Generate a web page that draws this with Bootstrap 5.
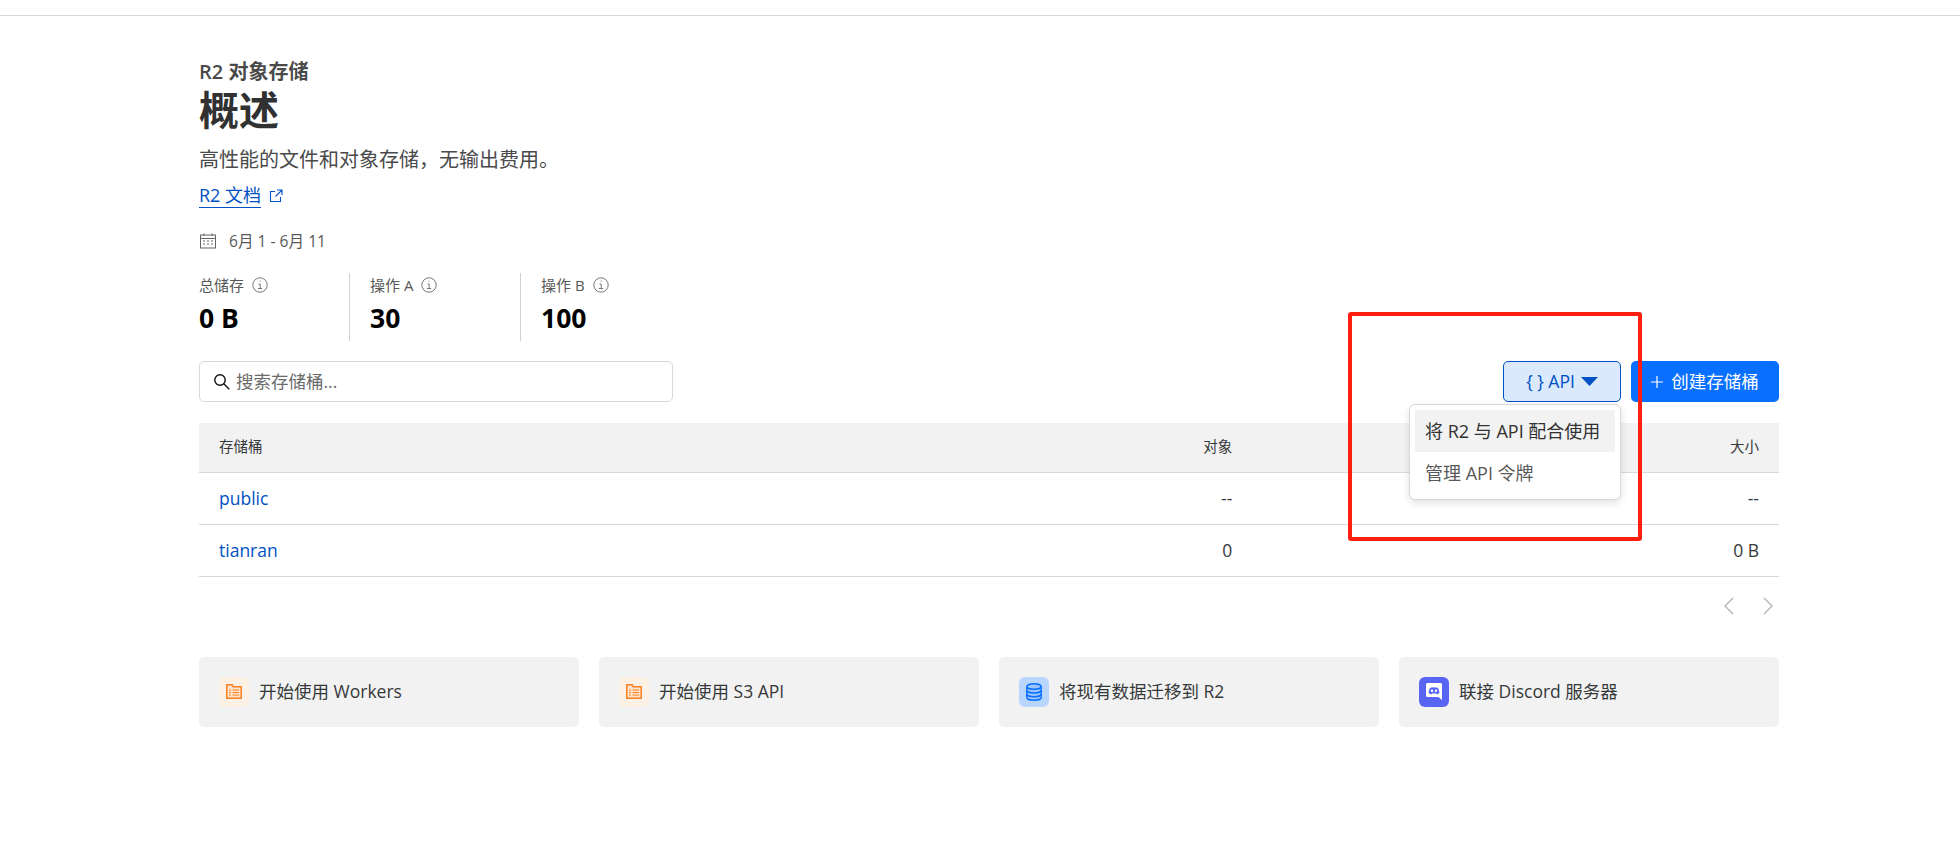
<!DOCTYPE html>
<html lang="zh">
<head>
    <meta charset="UTF-8">
    <meta name="viewport" content="width=device-width, initial-scale=1.0">
    <title>R2 对象存储</title>
    <link href="https://cdn.jsdelivr.net/npm/bootstrap@5.3.3/dist/css/bootstrap.min.css" rel="stylesheet">
    <style>
        body {
          font-family: "Open Sans", "Noto Sans CJK SC", sans-serif;
          color: #36393a;
          background: #fff;
        }
        .top-rule { height: 16px; border-bottom: 1px solid #d9d9d9; }
        .page-wrap { width: 1580px; margin-left: 199px; padding-top: 44px; }
        .crumb { font-size: 20px; font-weight: 600; line-height: 24px; color: #4a4a4a; }
        .page-title { font-size: 40px; font-weight: 700; line-height: 52px; margin: 0; color: #313131; }
        .page-desc { font-size: 20px; line-height: 24px; margin: 12px 0 0; color: #4a4a4a; }
        .doc-link { font-size: 18px; line-height: 24px; margin-top: 11px; }
        .doc-link a { color: #0051c3; text-decoration: none; border-bottom: 1px solid #0051c3; }
        .date-row { font-size: 15.6px; line-height: 20px; margin-top: 23px; gap: 12px; color: #595959; }
        .stats { margin-top: 22px; height: 68px; }
        .stat { width: 171px; padding-left: 20px; border-left: 1px solid #d0d0d0; }
        .stat:first-child { width: 150px; padding-left: 0; border-left: 0; }
        .stat-label { font-size: 15px; line-height: 20px; gap: 8px; color: #595959; padding-top: 2px; }
        .stat-value { font-size: 26.5px; font-weight: 700; line-height: 32px; color: #000; margin-top: 7px; }
        .toolbar { margin-top: 20px; height: 41px; }
        .search-box {
          width: 474px; height: 41px; border: 1px solid #d9d9d9; border-radius: 5px;
          padding-left: 13px; gap: 6px; font-size: 17.5px; color: #6b6b6b;
        }
        .api-btn, .create-btn { height: 41px; font-size: 17.5px; border-radius: 5px; padding: 0; }
        .api-btn {
          width: 118px; background: #dbe9fd; border: 1px solid #0051c3; color: #0051c3;
          gap: 6px; justify-content: center;
        }
        .api-btn::after { display: none; }
        .create-btn { width: 148px; background: #086fff; border: 0; color: #fff; gap: 8px; justify-content: center; }
        .action-group { gap: 10px; }
        .api-menu {
          top: calc(100% + 2px); right: 0; width: 212px; min-width: 0; padding: 5px;
          border: 1px solid #d9d9d9; border-radius: 6px; box-shadow: 0 3px 8px rgba(0,0,0,.12);
        }
        .api-menu .dropdown-item { height: 42px; padding: 0 10px; font-size: 18px; line-height: 42px; color: #595959; }
        .api-menu .dropdown-item.current { background: #f2f2f2; color: #313131; }
        .bucket-table { margin: 21px 0 0; table-layout: fixed; color: #36393a; }
        .bucket-table th, .bucket-table td { padding: 0 20px; vertical-align: middle; border-bottom: 1px solid #d9d9d9; }
        .bucket-table th { height: 49px; background: #f2f2f2; font-size: 14.5px; font-weight: 400; }
        .bucket-table td { height: 52px; font-size: 17.5px; }
        .bucket-table a { color: #0051c3; text-decoration: none; }
        .pager-row { gap: 23px; padding: 20px 5px 0 0; height: 60px; justify-content: flex-end; }
        .guide-row { margin-top: 20px; gap: 20px; }
        .guide-tile {
          flex: 1 1 0; height: 70px; background: #f2f2f2; border-radius: 5px;
          padding: 0 20px; gap: 10px; font-size: 17.5px; color: #36393a;
        }
        .tile-icon { width: 30px; height: 30px; border-radius: 6px; flex: none; }
        .tile-orange { background: #fdf1e6; }
        .tile-blue { background: #b9d6ff; }
        .tile-discord { background: #5865f2; }
        .red-frame {
          position: absolute; left: 1348px; top: 312px; width: 294px; height: 229px;
          border: 4px solid #ff1f10; border-radius: 3px; pointer-events: none; z-index: 2000;
        }
    </style>
</head>
<body>
<div class="top-rule"></div>
<div class="page-wrap">
    <!-- Header -->
    <div class="crumb">R2 对象存储</div>
    <h1 class="page-title">概述</h1>
    <p class="page-desc">高性能的文件和对象存储，无输出费用。</p>
    <div class="doc-link d-flex align-items-center gap-2">
        <a href="#">R2 文档</a>
        <svg width="14" height="14" viewBox="0 0 14 14" fill="none" stroke="#0051c3" stroke-width="1.1"><path d="M6 2.5H1.5v10h10V8M8 1h5v5M13 1L6.5 7.5"/></svg>
    </div>
    <div class="date-row d-flex align-items-center">
        <svg width="18" height="16" viewBox="0 0 18 16" fill="none" stroke="#666" stroke-width="1"><rect x="1.5" y="2" width="15" height="13"/><path d="M1.5 5.5h15M5 0.5V3M13 0.5V3M4 8h2M8 8h2M12 8h2M4 11h2M8 11h2M12 11h2"/></svg>
        <span>6月 1 - 6月 11</span>
    </div>

    <!-- Stats -->
    <div class="stats d-flex">
        <div class="stat">
            <div class="stat-label d-flex align-items-center">总储存 <svg width="16" height="16" viewBox="0 0 16 16" fill="none" stroke="#777"><circle cx="8" cy="8" r="7.2"/><path d="M6.5 7h1.7v4.5M6 11.5h4.2M7.6 4.2h1"/></svg></div>
            <div class="stat-value">0 B</div>
        </div>
        <div class="stat">
            <div class="stat-label d-flex align-items-center">操作 A <svg width="16" height="16" viewBox="0 0 16 16" fill="none" stroke="#777"><circle cx="8" cy="8" r="7.2"/><path d="M6.5 7h1.7v4.5M6 11.5h4.2M7.6 4.2h1"/></svg></div>
            <div class="stat-value">30</div>
        </div>
        <div class="stat">
            <div class="stat-label d-flex align-items-center">操作 B <svg width="16" height="16" viewBox="0 0 16 16" fill="none" stroke="#777"><circle cx="8" cy="8" r="7.2"/><path d="M6.5 7h1.7v4.5M6 11.5h4.2M7.6 4.2h1"/></svg></div>
            <div class="stat-value">100</div>
        </div>
    </div>

    <!-- Search and buttons -->
    <div class="toolbar d-flex align-items-center justify-content-between">
        <div class="search-box d-flex align-items-center">
            <svg width="17" height="17" viewBox="0 0 17 17" fill="none" stroke="#111" stroke-width="1.4"><circle cx="7" cy="7" r="5.2"/><path d="M10.8 10.8l5.4 5.4"/></svg>
            <span>搜索存储桶...</span>
        </div>
        <div class="action-group d-flex">
            <div class="dropdown">
                <button class="api-btn btn d-flex align-items-center dropdown-toggle" type="button">
                    <span>{ } API</span>
                    <svg width="17" height="9" viewBox="0 0 17 9"><path d="M0 0h17L8.500 9z" fill="#0051c3"/></svg>
                </button>
                <ul class="dropdown-menu show api-menu">
                    <li><a class="dropdown-item current" href="#">将 R2 与 API 配合使用</a></li>
                    <li><a class="dropdown-item" href="#">管理 API 令牌</a></li>
                </ul>
            </div>
            <button class="create-btn btn d-flex align-items-center" type="button">
                <svg width="12" height="12" viewBox="0 0 12 12" stroke="#fff" stroke-width="1.2"><path d="M6 0v12M0 6h12"/></svg>
                <span>创建存储桶</span>
            </button>
        </div>
    </div>

    <!-- Buckets -->
    <table class="table bucket-table">
        <thead>
            <tr>
                <th>存储桶</th>
                <th class="text-end">对象</th>
                <th class="text-end">大小</th>
            </tr>
        </thead>
        <tbody>
            <tr>
                <td><a href="#">public</a></td>
                <td class="text-end">--</td>
                <td class="text-end">--</td>
            </tr>
            <tr>
                <td><a href="#">tianran</a></td>
                <td class="text-end">0</td>
                <td class="text-end">0 B</td>
            </tr>
        </tbody>
    </table>
    <div class="pager-row d-flex align-items-start">
        <svg width="14" height="18" viewBox="0 0 14 18" fill="none" stroke="#b5b5b5" stroke-width="1.4"><path d="M10 1L2 9l8 8"/></svg>
        <svg width="14" height="18" viewBox="0 0 14 18" fill="none" stroke="#b5b5b5" stroke-width="1.4"><path d="M4 1l8 8-8 8"/></svg>
    </div>

    <!-- Guides -->
    <div class="guide-row d-flex">
        <div class="guide-tile d-flex align-items-center">
            <span class="tile-icon tile-orange d-flex align-items-center justify-content-center">
                <svg width="16" height="15" viewBox="0 0 16 15" fill="#fde3cb" stroke="#f6821f" stroke-width="1.5"><path d="M.8.800h5.400l1 2h8v11.400H.8z"/><path fill="none" stroke-width="1" d="M3 6h2M3 8.500h2M3 11h2M6.500 6h6.500M6.500 8.500h6.500M6.500 11h6.500"/></svg>
            </span>
            <span>开始使用 Workers</span>
        </div>
        <div class="guide-tile d-flex align-items-center">
            <span class="tile-icon tile-orange d-flex align-items-center justify-content-center">
                <svg width="16" height="15" viewBox="0 0 16 15" fill="#fde3cb" stroke="#f6821f" stroke-width="1.5"><path d="M.8.800h5.400l1 2h8v11.400H.8z"/><path fill="none" stroke-width="1" d="M3 6h2M3 8.500h2M3 11h2M6.500 6h6.500M6.500 8.500h6.500M6.500 11h6.500"/></svg>
            </span>
            <span>开始使用 S3 API</span>
        </div>
        <div class="guide-tile d-flex align-items-center">
            <span class="tile-icon tile-blue d-flex align-items-center justify-content-center">
                <svg width="16" height="18" viewBox="0 0 16 18" fill="#9cc4fd" stroke="#086fff" stroke-width="1.4"><path d="M.8 3.500v11c0 1.500 3.200 2.800 7.200 2.800s7.200-1.300 7.200-2.800v-11"/><ellipse cx="8" cy="3.500" rx="7.200" ry="2.800"/><path fill="none" d="M.8 7.200c0 1.500 3.200 2.800 7.200 2.800s7.200-1.300 7.200-2.800M.8 10.900c0 1.500 3.200 2.800 7.200 2.800s7.200-1.300 7.200-2.800"/></svg>
            </span>
            <span>将现有数据迁移到 R2</span>
        </div>
        <div class="guide-tile d-flex align-items-center">
            <span class="tile-icon tile-discord d-flex align-items-center justify-content-center">
                <svg width="16" height="17" viewBox="0 0 16 17"><path d="M1.500 0h13A1.500 1.500 0 0 1 16 1.500V17l-3.500-3h-11A1.500 1.500 0 0 1 0 12.500v-11A1.500 1.500 0 0 1 1.500 0z" fill="#fff"/><path d="M2.500 10c.3-2.300.9-4 1.800-5.200 2.200-.8 5.200-.8 7.400 0 .9 1.200 1.500 2.900 1.800 5.200-1.200.9-2.300 1.200-3 1.200l-.7-1c-1.400.3-2.200.3-3.600 0l-.7 1c-.7 0-1.800-.3-3-1.200z" fill="#5865f2"/><circle cx="6" cy="7.700" r="1.200" fill="#fff"/><circle cx="10" cy="7.700" r="1.200" fill="#fff"/></svg>
            </span>
            <span>联接 Discord 服务器</span>
        </div>
    </div>
</div>

<!-- annotation on top of the screenshot -->
<div class="red-frame"></div>

<script src="https://cdn.jsdelivr.net/npm/bootstrap@5.3.3/dist/js/bootstrap.bundle.min.js"></script>
</body>
</html>
